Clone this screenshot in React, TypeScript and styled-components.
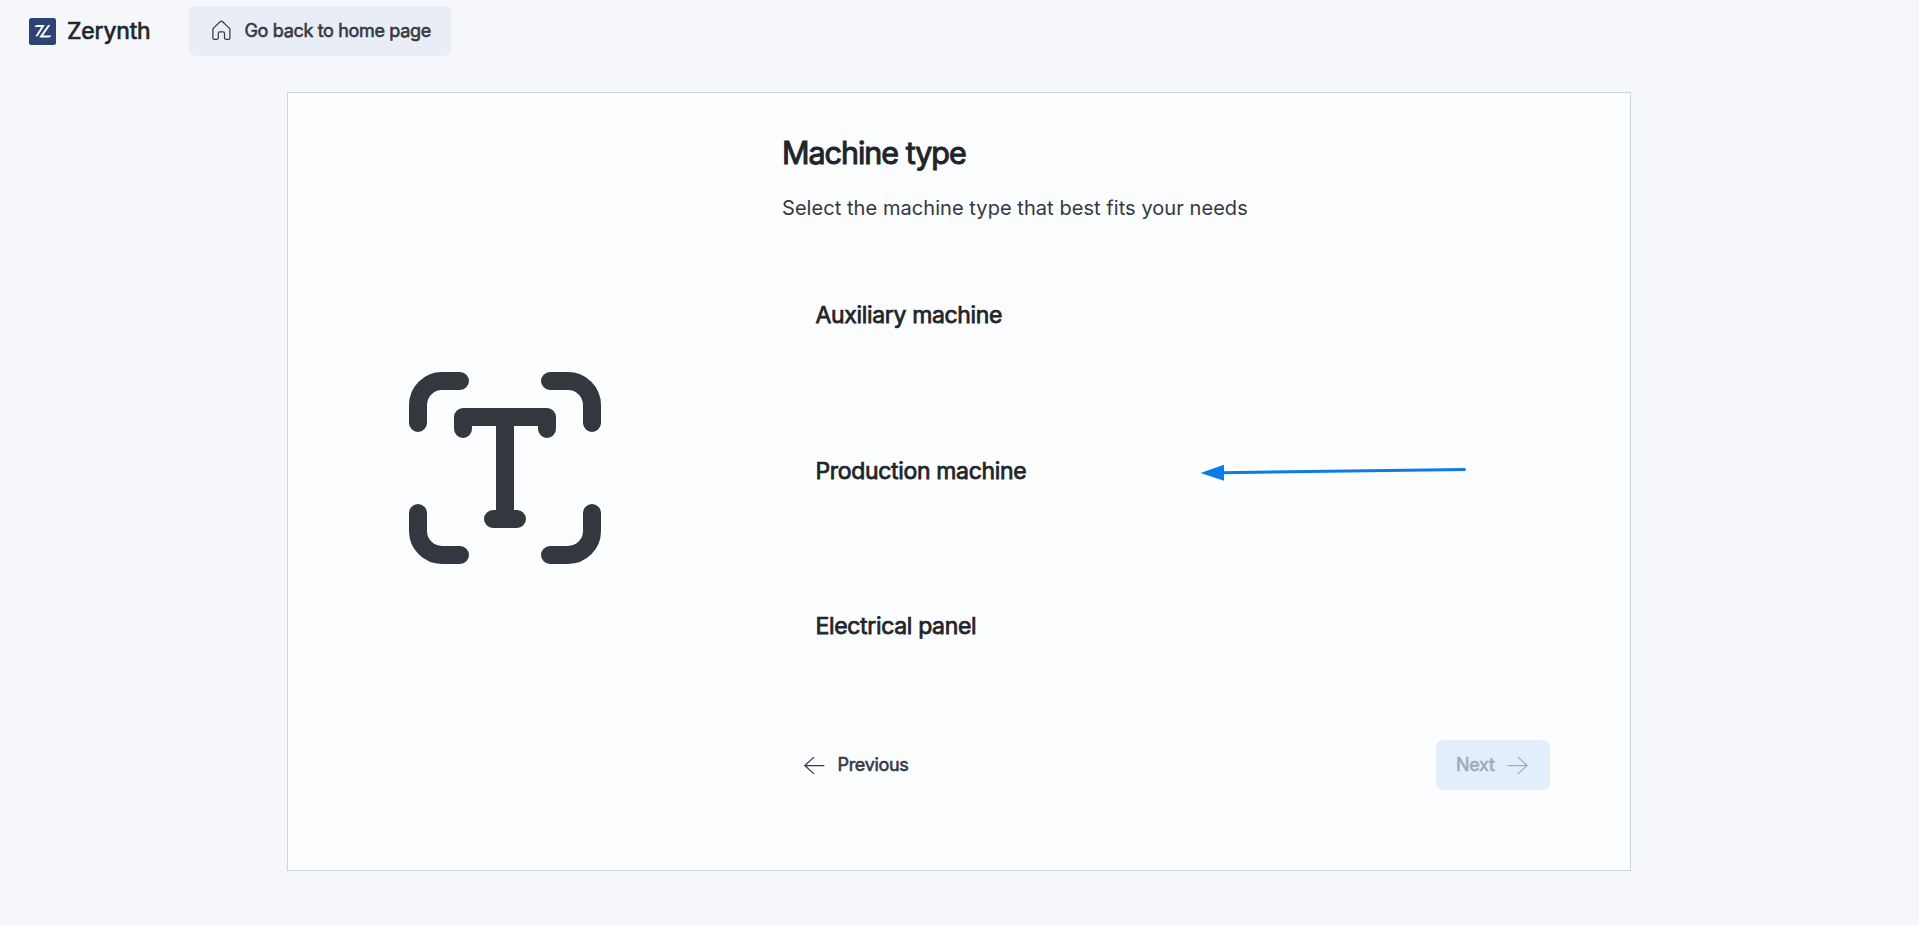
import React from 'react';
import styled, { createGlobalStyle } from 'styled-components';

const Global = createGlobalStyle`
  *, *::before, *::after { box-sizing: border-box; }
  body {
    margin: 0;
    background: #f5f7fb;
    color: #343741;
    font-family: Inter, "Liberation Sans", sans-serif;
  }
`;

const Page = styled.div`
  height: 925px;
  overflow: hidden;
`;

const TopBar = styled.header`
  display: flex;
  align-items: center;
  height: 62px;
  padding-left: 29px;
`;

const Brand = styled.div`
  display: flex;
  align-items: center;
  gap: 11px;
  width: 160px;
  font-size: 23px;
  line-height: 30px;
  letter-spacing: -0.15px;
  color: #212429;
  -webkit-text-stroke: 0.7px currentColor;

  svg { display: block; }
`;

const Button = styled.button<{ $tone?: 'soft' | 'disabled' }>`
  display: flex;
  align-items: center;
  gap: 11.5px;
  height: 50px;
  padding: 0 20px;
  border: 0;
  border-radius: 7px;
  background: ${p => (p.$tone === 'soft' ? '#e9edf6' : p.$tone === 'disabled' ? '#e2eefb' : 'transparent')};
  color: ${p => (p.$tone === 'disabled' ? '#a2abb6' : '#363a43')};
  font: 400 18px/26px Inter, "Liberation Sans", sans-serif;
  letter-spacing: -0.33px;
  white-space: nowrap;
  -webkit-text-stroke: 0.6px currentColor;

  svg { display: block; flex: none; }
`;

const Card = styled.main`
  display: flex;
  width: 1344px;
  height: 779px;
  margin: 30px 0 0 287px;
  padding: 0 80px 80px 79px;
  border: 1px solid #cad6e3;
  background: #fcfdff;
`;

const Illustration = styled.div`
  display: flex;
  justify-content: center;
  width: 276px;
  margin-right: 139px;
  padding-top: 279px;
  flex: none;
`;

const Content = styled.section`
  display: flex;
  flex-direction: column;
  flex: 1;
  padding-top: 40px;
`;

const Title = styled.h1`
  margin: 0;
  font-size: 30.5px;
  font-weight: 400;
  line-height: 40px;
  letter-spacing: -1.03px;
  color: #212429;
  -webkit-text-stroke: 1px currentColor;
`;

const Subtitle = styled.p`
  margin: 20px 0 0;
  font-size: 20px;
  line-height: 30px;
  letter-spacing: 0.06px;
`;

const Options = styled.div`
  position: relative;
  display: flex;
  flex-direction: column;
  margin-top: 14.5px;
`;

const Option = styled.div`
  display: flex;
  align-items: center;
  height: 155.5px;
  padding-left: 33.5px;
  font-size: 23px;
  line-height: 30px;
  letter-spacing: -0.34px;
  color: #212429;
  -webkit-text-stroke: 0.75px currentColor;
`;

const Pointer = styled.svg`
  position: absolute;
  left: 418px;
  top: 219.5px;
`;

const Footer = styled.footer`
  display: flex;
  justify-content: space-between;
  margin-top: auto;
`;

const Logo = () => (
  <svg width="27" height="27" viewBox="0 0 27 27">
    <rect width="27" height="27" rx="2.5" fill="#2d4373" />
    <path d="M5.6 8.9Q6.2 7.1 8.4 7.1H15.8L8.6 18.2H6.4L12.3 8.9Z" fill="#fff" />
    <path d="M19 7.1H21.4L14 17.4H22.4Q21.6 19.4 19.6 19.4H10.2Z" fill="#fff" />
  </svg>
);

const HomeIcon = () => (
  <svg width="24" height="24" viewBox="0 0 24 24" fill="none" stroke="currentColor" strokeWidth="1.25" strokeLinejoin="round">
    <path d="M3.9 10.3Q3.9 9.6 4.4 9.1L11.5 2.5Q12.4 1.7 13.3 2.5L20.3 9.1Q20.9 9.6 20.9 10.3V19Q20.9 20.3 19.7 20.3H16.8Q15.5 20.3 15.5 19.1V14.2Q15.5 12.9 14.2 12.9H10.6Q9.3 12.9 9.3 14.2V19.1Q9.3 20.3 8 20.3H5.1Q3.9 20.3 3.9 19Z" />
  </svg>
);

const ArrowLeft = () => (
  <svg width="24" height="24" viewBox="0 0 24 24" fill="none" stroke="currentColor" strokeWidth="1.25">
    <path d="M22.3 12.5H2.8M12 4.1L2.8 12.5L12 20.9" strokeLinejoin="round" />
  </svg>
);

const ArrowRight = () => (
  <svg width="24" height="24" viewBox="0 0 24 24" fill="none" stroke="currentColor" strokeWidth="1.25">
    <path d="M1.6 12.5H21.1M11.9 4.1L21.1 12.5L11.9 20.9" strokeLinejoin="round" />
  </svg>
);

const TextScanIcon = () => (
  <svg width="192" height="192" viewBox="0 0 192 192" fill="none" stroke="#33383f" strokeWidth="18" strokeLinecap="round">
    <path d="M9 51V33A24 24 0 0 1 33 9H51" />
    <path d="M141 9H159A24 24 0 0 1 183 33V51" />
    <path d="M183 141V159A24 24 0 0 1 159 183H141" />
    <path d="M51 183H33A24 24 0 0 1 9 159V141" />
    <path d="M54 57V45H138V57" strokeLinejoin="round" />
    <path d="M96 45V147M84 147H108" />
  </svg>
);

const machineTypes = ['Auxiliary machine', 'Production machine', 'Electrical panel'];

export default function App() {
  return (
    <Page>
      <Global />
      <TopBar>
        <Brand>
          <Logo />
          <span>Zerynth</span>
        </Brand>
        <Button $tone="soft">
          <HomeIcon />
          <span>Go back to home page</span>
        </Button>
      </TopBar>
      <Card>
        <Illustration>
          <TextScanIcon />
        </Illustration>
        <Content>
          <Title>Machine type</Title>
          <Subtitle>Select the machine type that best fits your needs</Subtitle>
          <Options>
            {machineTypes.map(type => (
              <Option key={type}>{type}</Option>
            ))}
            <Pointer width="270" height="28" viewBox="0 0 270 28">
              <path d="M22 15.7L265.5 12.6" stroke="#0b7bea" strokeWidth="3" />
              <path d="M0.5 15.9L24 7.7V23.7Z" fill="#0b7bea" />
            </Pointer>
          </Options>
          <Footer>
            <Button>
              <ArrowLeft />
              <span>Previous</span>
            </Button>
            <Button $tone="disabled" disabled>
              <span>Next</span>
              <ArrowRight />
            </Button>
          </Footer>
        </Content>
      </Card>
    </Page>
  );
}
